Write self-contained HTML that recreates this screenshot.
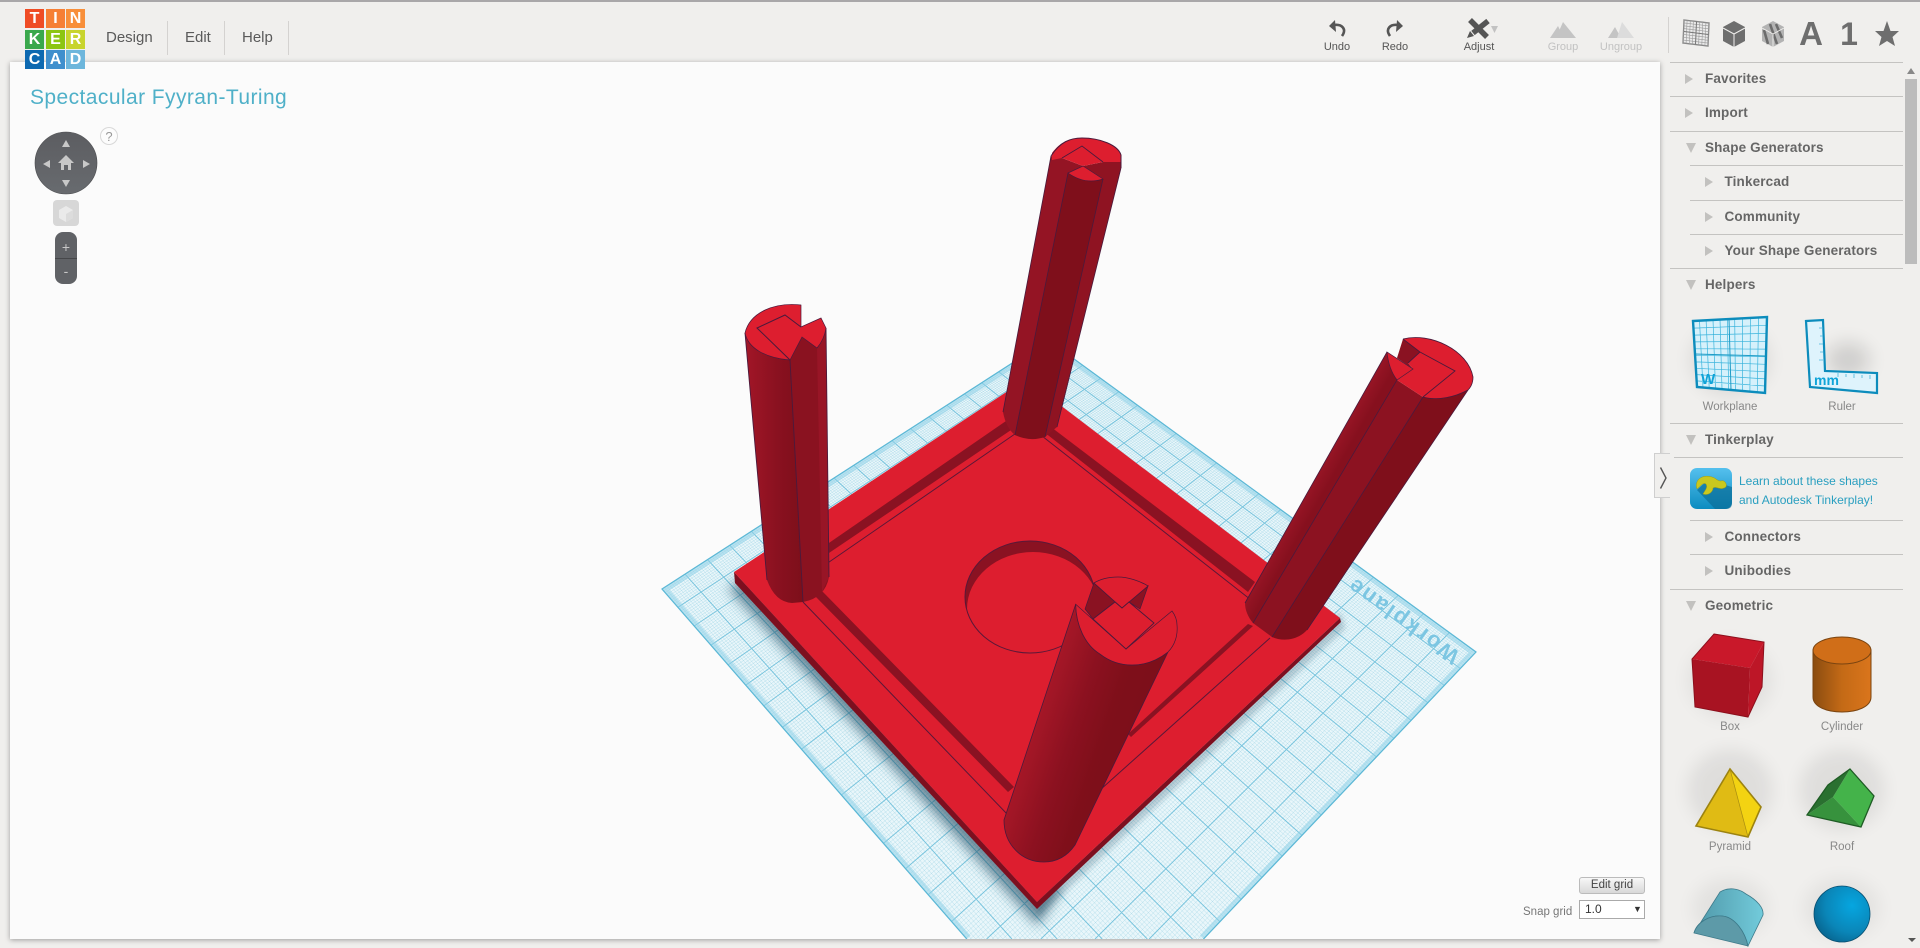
<!DOCTYPE html>
<html><head><meta charset="utf-8"><title>Tinkercad</title>
<style>
html,body{margin:0;padding:0;width:1920px;height:948px;overflow:hidden;background:#f0efed;font-family:"Liberation Sans",sans-serif;color:#555}
.a{position:absolute;white-space:nowrap}
#top{left:0;top:0;width:1920px;height:2px;background:#a9a7a9}
#canvas{left:10px;top:62px;width:1650px;height:877px;background:#fbfbfb;box-shadow:0 1px 5px rgba(0,0,0,.35)}
.menu{font-size:15px;color:#5a5a5a;top:29px;line-height:18px}
.sep{width:1px;top:21px;height:34px;background:#d4d2d0}
.tb{font-size:11px;top:41px;line-height:13px;transform:translateX(-50%);color:#555}
.dis{color:#c2c2c2}
.li{height:1px;background:#c4c3c1;right:17px}
.h{font-size:13.5px;font-weight:bold;color:#666;line-height:16px;letter-spacing:.15px}
.lab{font-size:11.5px;color:#888;transform:translateX(-50%);line-height:14px}
#logo div{position:absolute;width:19px;height:19px;color:#fff;font:bold 16px/19px "Liberation Sans",sans-serif;text-align:center}
svg{position:absolute;left:0;top:0}
</style></head><body>
<div class="a" id="top"></div>
<div class="a" id="canvas"></div>

<div class="a" id="logo" style="left:25px;top:9px;width:60px;height:60px">
<div style="left:0;top:0;background:#ef4c25">T</div><div style="left:21px;top:0;background:#f67f35">I</div><div style="left:41px;top:0;background:#f88f3a">N</div>
<div style="left:0;top:21px;background:#3aa84c">K</div><div style="left:21px;top:21px;background:#8cc512">E</div><div style="left:41px;top:21px;background:#c8d42e">R</div>
<div style="left:0;top:41px;background:#0d69b1">C</div><div style="left:21px;top:41px;background:#3f8fcd">A</div><div style="left:41px;top:41px;background:#6db6dc">D</div>
</div>
<div class="a menu" style="left:106px">Design</div><div class="a sep" style="left:167px"></div>
<div class="a menu" style="left:185px">Edit</div><div class="a sep" style="left:224px"></div>
<div class="a menu" style="left:242px">Help</div><div class="a sep" style="left:288px"></div>

<svg width="1920" height="948" viewBox="0 0 1920 948">
<defs>
<clipPath id="cv"><rect x="10" y="62" width="1650" height="877"/></clipPath>
<clipPath id="pl"><polygon points="662,589 1048,340 1476,652 1203.500,939 966.800,939"/></clipPath>
<clipPath id="rec"><ellipse cx="1030" cy="597" rx="65" ry="56"/></clipPath>
<filter id="b6" x="-30%" y="-30%" width="160%" height="160%"><feGaussianBlur stdDeviation="6"/></filter>
<filter id="b3" x="-30%" y="-30%" width="160%" height="160%"><feGaussianBlur stdDeviation="3"/></filter>
<filter id="b9" x="-50%" y="-50%" width="200%" height="200%"><feGaussianBlur stdDeviation="9"/></filter>
<linearGradient id="g1" x1="0" x2="1" y1="0" y2="0"><stop offset="0" stop-color="#a21627"/><stop offset=".55" stop-color="#8a1120"/><stop offset="1" stop-color="#7d0f1a"/></linearGradient>
<linearGradient id="g3" gradientUnits="userSpaceOnUse" x1="1300" y1="470" x2="1328" y2="486"><stop offset="0" stop-color="#b01a2b"/><stop offset=".6" stop-color="#941424"/><stop offset="1" stop-color="#86101e"/></linearGradient>
<linearGradient id="g4" gradientUnits="userSpaceOnUse" x1="1034" y1="730" x2="1120" y2="759"><stop offset="0" stop-color="#a51727"/><stop offset=".4" stop-color="#8c1120"/><stop offset=".75" stop-color="#7f0f1a"/><stop offset="1" stop-color="#7d0f1a"/></linearGradient>
<linearGradient id="cyl" x1="0" x2="1" y1="0" y2="0"><stop offset="0" stop-color="#8a4c10"/><stop offset=".5" stop-color="#c46a16"/><stop offset="1" stop-color="#da751c"/></linearGradient>
<linearGradient id="nav" x1="0" x2="0" y1="0" y2="1"><stop offset="0" stop-color="#5c5d61"/><stop offset="1" stop-color="#686b6f"/></linearGradient>
<linearGradient id="tile" x1="0" x2="0" y1="0" y2="1"><stop offset="0" stop-color="#55c0ee"/><stop offset="1" stop-color="#0c8cc0"/></linearGradient>
<radialGradient id="sph" cx=".68" cy=".35" r=".8"><stop offset="0" stop-color="#06a6e0"/><stop offset=".6" stop-color="#0a86b8"/><stop offset="1" stop-color="#075f88"/></radialGradient>
<linearGradient id="half" x1="0" x2="1" y1="0" y2="0"><stop offset="0" stop-color="#4f97a8"/><stop offset="1" stop-color="#72cbdb"/></linearGradient>
</defs>

<g clip-path="url(#cv)">
<!-- workplane -->
<polygon points="662,589 1048,340 1476,652 1203.500,939 966.800,939" fill="#e9f6fa"/>
<path id="gmin" d="" stroke="#7fc8de" stroke-width=".5" stroke-opacity=".5" fill="none"/>
<path id="gmaj" d="" stroke="#5cb8d6" stroke-width="1" stroke-opacity=".8" fill="none"/>
<g clip-path="url(#pl)"><path d="M966.800,939 L662,589 L1048,340 L1476,652 L1203.500,939" fill="none" stroke="#8fd2e8" stroke-width="10" stroke-opacity=".55"/></g>
<path d="M966.800,939 L662,589 L1048,340 L1476,652 L1203.500,939" fill="none" stroke="#5cb8d6" stroke-width="1.2"/>
<text transform="translate(1461,653) rotate(215.4)" font-size="22" font-weight="bold" fill="#7cc6e2" letter-spacing="2.2" font-family="Liberation Sans, sans-serif">Workplane</text>
<!-- shadow -->
<g clip-path="url(#pl)"><polygon points="728,588 1038,926 1060,890 760,570" fill="#1a4a60" opacity=".6" filter="url(#b6)"/>
<polygon points="1037,918 1345,628 1340,612 1037,895" fill="#1a4a60" opacity=".25" filter="url(#b3)"/></g>
<!-- plate -->
<polygon points="734,572 1037,902 1340,618 1341,622 1037,909 735,583" fill="#7d0f1f"/>
<polygon points="1026,379 1340,618 1037,902 734,572" fill="#dd1e2f"/>
<!-- recess lines -->
<polygon points="1006,421 1014,428 826,555 826,545" fill="#8a1222"/>
<polygon points="1047,424 1255,582 1248,592 1044,432" fill="#8a1222"/>
<polygon points="815,596 822,591 1014,787 1008,792" fill="#8a1222"/>
<polygon points="1128,734 1248,624 1253,626 1131,737" fill="#8a1222"/>
<path d="M1028,425 L803,580 M1028,425 L1260,607 M803,602 L1008,815 M1100,790 L1270,638" stroke="#5a1838" stroke-width="1" fill="none"/>
<!-- circular recess -->
<ellipse cx="1030" cy="597" rx="65" ry="56" fill="#8a1222"/>
<ellipse cx="1033" cy="609" rx="66" ry="57" fill="#dd1e2f" clip-path="url(#rec)"/>
<ellipse cx="1030" cy="597" rx="65" ry="56" fill="none" stroke="#5a1838" stroke-width="1"/>

<!-- post back -->
<path d="M1051,156 L1003,412 Q1006,428 1015,435 L1068,173 L1083,166 L1062,158 Z" fill="#941424"/>
<path d="M1103,179 L1045,437 L1057,427 L1121,168 L1121,160 L1103,162 L1083,166 Z" fill="#8f1322"/>
<path d="M1068,173 L1015,435 Q1030,442 1045,437 L1103,179 Q1085,184 1068,173 Z" fill="#7f0f1b"/>
<path d="M1068,173 L1015,435 M1103,179 L1045,437 M1051,156 L1003,412 M1121,168 L1057,427" stroke="#4a1a3c" stroke-width=".8" fill="none"/>
<path d="M1052,153 C1060,142 1070,138 1082,138 C1100,138 1118,145 1121,155 L1121,162 L1103,162 L1082,146 L1062,158 L1052,160 Z" fill="#dd1e2f"/>
<path d="M1051,156 C1060,142 1070,138 1082,138 C1100,138 1118,145 1121,155 L1121,168" fill="none" stroke="#4a1a3c" stroke-width="1"/>
<polygon points="1062,158 1082,146 1103,162 1083,166" fill="#dd1e2f"/>
<path d="M1062,158 L1082,146 L1103,162" fill="none" stroke="#4a1a3c" stroke-width=".9"/>
<path d="M1068,173 L1083,166 L1103,179 Q1085,185 1068,173 Z" fill="#dd1e2f" stroke="#4a1a3c" stroke-width=".7"/>

<!-- post left -->
<path d="M745,333 L767,580 Q775,602 792,603 L803,602 L790,360 C765,358 748,348 745,333 Z" fill="url(#g1)"/>
<path d="M790,360 L803,602 Q825,598 829,577 L826,328 L817,348 L802,337 Z" fill="#8a1220"/>
<path d="M817,348 L826,328 L829,577 L822,592 Z" fill="#981526"/>
<path d="M790,360 L803,602 M745,333 L767,580 M826,328 L829,577" stroke="#4a1a3c" stroke-width=".9" fill="none"/>
<path d="M745,333 C750,312 775,302 801,305 L801,327 L821,318 L826,328 C825,335 822,342 817,348 L802,337 L790,360 C765,358 748,348 745,333 Z" fill="#dd1e2f" stroke="#4a1a3c" stroke-width=".7"/>
<path d="M790,360 L757,328 L785,315 L801,327" stroke="#4a1a3c" stroke-width="1" fill="none"/>

<!-- post right -->
<path d="M1387,352 C1388,362 1391,372 1397,380 L1253,623 C1248,617 1245,610 1245,603 Z" fill="url(#g3)"/>
<path d="M1397,380 L1423,397 L1272,637 L1253,623 Z" fill="#8c1221"/>
<path d="M1423,397 C1438,401 1455,397 1468,390 L1307,630 C1298,640 1283,642 1272,637 Z" fill="#7f0f1b"/>
<path d="M1397,380 L1253,623 M1423,397 L1272,637 M1468,390 L1307,630 M1387,352 L1245,603" stroke="#4a1a3c" stroke-width=".8" fill="none"/>
<polygon points="1403,339 1420,352 1408,363 1413,369 1397,358" fill="#8a1222"/>
<path d="M1403,339 C1430,332 1468,350 1473,377 C1473,383 1471,387 1468,390 C1455,397 1438,401 1423,397 L1455,371 L1420,352 Z" fill="#dd1e2f"/>
<path d="M1403,339 C1430,332 1468,350 1473,377 C1473,383 1471,387 1468,390 C1455,397 1438,401 1423,397" fill="none" stroke="#4a1a3c" stroke-width=".8"/>
<polygon points="1420,352 1455,371 1423,397 1397,380 1413,369 1408,363" fill="#dd1e2f"/>
<path d="M1408,363 L1420,352 L1455,371 L1423,397 M1403,339 L1420,352" fill="none" stroke="#4a1a3c" stroke-width=".9"/>
<path d="M1387,352 L1413,369 L1397,380 C1391,372 1388,362 1387,352 Z" fill="#dd1e2f" stroke="#4a1a3c" stroke-width=".7"/>

<!-- post front -->
<path d="M1075.700,604.300 L1004,820 C1004,845 1022,862 1044,862 C1058,862 1068,855 1075,845 L1168,652 C1145,670 1118,668 1100,654 C1085,645 1076,625 1075.700,604.300 Z" fill="url(#g4)" stroke="#4a1a3c" stroke-width=".8"/>
<polygon points="1094,583 1085,609 1093,619 1115,602 1122,608" fill="#8a1222" stroke="#4a1a3c" stroke-width=".7"/>
<polygon points="1148,586 1140,609 1129,602 1122,608" fill="#8a1222" stroke="#4a1a3c" stroke-width=".7"/>
<path d="M1094,583 C1102,578 1110,577 1118,577 C1128,577 1140,581 1148,586 L1122,608 Z" fill="#dd1e2f" stroke="#4a1a3c" stroke-width=".8"/>
<path d="M1075.700,604.300 C1076,625 1085,645 1100,654 C1118,668 1145,670 1168,652 C1175,645 1178,635 1177,625 C1177,620 1175,615 1172,611 L1126,649 Z" fill="#dd1e2f" stroke="#4a1a3c" stroke-width=".7"/>
<polygon points="1093,619 1115,602 1122,608 1129,602 1154,623 1126,649" fill="#dd1e2f" stroke="#4a1a3c" stroke-width=".9"/>
</g>

<!-- nav -->
<circle cx="66" cy="163" r="31" fill="url(#nav)" stroke="#48494c" stroke-width=".6"/>
<g fill="#c8c8c8"><polygon points="66,140 62,147 70,147"/><polygon points="66,187 62,180 70,180"/><polygon points="43,164 50,160 50,168"/><polygon points="90,164 83,160 83,168"/>
<path d="M66,155 L58,163 L61,163 L61,170 L64,170 L64,165 L68,165 L68,170 L71,170 L71,163 L74,163 Z"/></g>
<circle cx="109" cy="136" r="8.5" fill="#fcfcfc" stroke="#d8d8d8"/>
<text x="109" y="141" text-anchor="middle" font-size="13" fill="#999" font-family="Liberation Sans, sans-serif">?</text>
<rect x="53" y="200" width="26" height="26" rx="4" fill="#d7d7d7"/>
<polygon points="66,206 73,210 73,218 66,222 59,218 59,210" fill="#eaeaea"/><polygon points="66,214 73,210 73,218 66,222" fill="#dcdcdc"/>
<rect x="55" y="232" width="22" height="52" rx="8" fill="#606266"/>
<rect x="55" y="258" width="22" height="1" fill="#46474a"/>
<text x="66" y="252" text-anchor="middle" font-size="14" fill="#c8c8c8" font-family="Liberation Sans, sans-serif">+</text>
<text x="66" y="276" text-anchor="middle" font-size="14" fill="#c8c8c8" font-family="Liberation Sans, sans-serif">-</text>

<!-- toolbar icons -->
<g fill="none" stroke="#555" stroke-width="2.6"><path d="M1342,36 C1347,29 1342,24 1334,25"/><path d="M1390,36 C1385,29 1390,24 1398,25"/></g>
<g fill="#555"><polygon points="1329,26 1335,20 1336,32"/><polygon points="1403,26 1397,20 1396,32"/></g>
<g stroke="#555" stroke-width="5.5" fill="none"><path d="M1470,20 L1487,37"/><path d="M1488,21 L1473,33"/></g><polygon points="1467,38 1470,31 1474,36" fill="#555"/>
<polygon points="1491,26 1498,26 1494.5,33" fill="#c2c2c2"/>
<g fill="#c4c4c4"><polygon points="1550,38 1558,26 1564,38"/><polygon points="1556,38 1563,22 1576,38"/><polygon points="1608,38 1615,27 1621,38"/></g>
<polygon points="1617,38 1622,22 1634,38" fill="#dcdcdc"/>
<rect x="1668" y="17" width="1" height="36" fill="#d4d2d0"/>

<!-- top shape icons -->
<polygon points="1684,20 1709,23 1708,46 1683,43" fill="#eaeaea" stroke="#777" stroke-width="1.3"/>
<path id="ic0" d="" stroke="#999" stroke-width=".6" fill="none"/>
<path d="M1696.5,21.5 L1695.5,44.5 M1684,31.5 L1708.5,34.5" stroke="#777" stroke-width="1" fill="none"/>
<polygon points="1734,21 1745,27 1745,41 1734,47 1723,41 1723,27" fill="#6e6e6e"/>
<path d="M1723,28 L1734,34 L1745,28 M1734,34 V47" stroke="#f0efed" stroke-width="1" fill="none"/>
<polygon points="1773,21 1784,27 1784,41 1773,47 1762,41 1762,27" fill="#b3b3b3"/>
<path d="M1764,30 L1768,44 M1770,24 L1777,44 M1776,24 L1782,38" stroke="#6c6c6c" stroke-width="2.6" fill="none"/>
<path d="M1762,28 L1773,34 L1784,28 M1773,34 V47" stroke="#f0efed" stroke-width=".9" fill="none"/>
<text x="1811" y="45" text-anchor="middle" font-size="33" font-weight="bold" fill="#6e6e6e" font-family="Liberation Sans, sans-serif">A</text>
<text x="1849" y="45" text-anchor="middle" font-size="32" font-weight="bold" fill="#6e6e6e" font-family="Liberation Sans, sans-serif">1</text>
<polygon points="1887,21 1890.5,31 1899,31 1892.5,37 1895,46 1887,41 1879,46 1881.5,37 1875,31 1883.5,31" fill="#6e6e6e"/>

<!-- accordion arrows -->
<g fill="#c2c1bf">
<polygon points="1685,74 1693,79 1685,84"/><polygon points="1685,108 1693,113 1685,118"/><polygon points="1686,143 1696,143 1691,153"/>
<polygon points="1705,177 1713,182 1705,187"/><polygon points="1705,212 1713,217 1705,222"/><polygon points="1705,246 1713,251 1705,256"/>
<polygon points="1686,280 1696,280 1691,290"/><polygon points="1686,435 1696,435 1691,445"/>
<polygon points="1705,532 1713,537 1705,542"/><polygon points="1705,566 1713,571 1705,576"/><polygon points="1686,601 1696,601 1691,611"/>
</g>
<!-- scrollbar -->
<rect x="1905" y="79" width="12" height="185" fill="#bcbcbc"/>
<polygon points="1911,68 1915,74 1907,74" fill="#888"/>
<polygon points="1908,938 1916,938 1912,942" fill="#555"/>

<!-- helper icons -->
<ellipse cx="1730" cy="360" rx="40" ry="36" fill="#000" opacity=".08" filter="url(#b9)"/>
<polygon points="1693,321 1767,317 1765,393 1697,387" fill="#d6f1fb"/>
<path id="ic1" d="" stroke="#3ab4dc" stroke-width=".7" fill="none"/>
<path d="M1729,319 L1731,390 M1695,354 L1766,356" stroke="#1f9cc6" stroke-width="1" fill="none"/>
<polygon points="1693,321 1767,317 1765,393 1697,387" fill="none" stroke="#0c8cbc" stroke-width="2.4"/>
<text x="1701" y="384" font-size="15" font-weight="bold" fill="#0fa4d8" font-family="Liberation Sans, sans-serif">W</text>
<ellipse cx="1848" cy="360" rx="22" ry="18" fill="#000" opacity=".13" filter="url(#b9)"/>
<polygon points="1806,321 1823,320 1825,371 1877,373 1877,393 1810,387" fill="#def3fc" stroke="#0c8cbc" stroke-width="2.2"/>
<path d="M1823,328 h-4 M1823,336 h-3 M1823,344 h-4 M1823,352 h-3 M1823,360 h-4 M1838,373 v4 M1846,374 v3 M1854,374 v4 M1862,375 v3 M1870,375 v4" stroke="#4ab5da" stroke-width=".8" fill="none"/>
<text x="1814" y="385" font-size="14" font-weight="bold" fill="#0fa4d8" font-family="Liberation Sans, sans-serif">mm</text>

<!-- tinkerplay tile -->
<rect x="1690" y="468" width="42" height="41" rx="7" fill="url(#tile)"/>
<path d="M1697,490 L1715,509 L1726,509 Q1732,509 1732,503 L1732,487 L1708,480 Z" fill="#0b6d99" opacity=".7"/>
<path d="M1697,489 C1694,480 1702,474 1712,477 C1716,478 1717,481 1721,481 C1725,479 1729,487 1724,488 C1720,490 1716,486 1713,488 C1713,492 1708,496 1703,494 C1705,490 1708,488 1706,484 C1703,482 1701,486 1697,489 Z" fill="#c9c81e" stroke="#9d9c16" stroke-width=".5"/>

<!-- shapes -->
<ellipse cx="1730" cy="680" rx="42" ry="38" fill="#000" opacity=".06" filter="url(#b9)"/>
<polygon points="1714,634 1764,642 1750,668 1692,659" fill="#c9182a"/>
<polygon points="1692,659 1750,668 1748,717 1695,707" fill="#a81322"/>
<polygon points="1750,668 1764,642 1762,687 1748,717" fill="#bd1627"/>
<polygon points="1714,634 1764,642 1762,687 1748,717 1695,707 1692,659" fill="none" stroke="#8c0f1c" stroke-width="1"/>
<path d="M1813,650 V697 C1813,717 1871,717 1871,697 V650 Z" fill="url(#cyl)" stroke="#7a4410" stroke-width="1"/>
<ellipse cx="1842" cy="650.5" rx="29" ry="13.5" fill="#d06e18" stroke="#7a4410" stroke-width="1"/>

<ellipse cx="1730" cy="790" rx="42" ry="40" fill="#000" opacity=".07" filter="url(#b9)"/>
<polygon points="1730,769 1696,826 1748,837" fill="#e0bb14"/>
<polygon points="1730,769 1761,807 1748,837" fill="#f3d312"/>
<polygon points="1730,769 1761,807 1748,837 1696,826" fill="none" stroke="#9c8310" stroke-width="1.6"/>
<path d="M1730,769 L1748,837" stroke="#a88d10" stroke-width=".7"/>
<ellipse cx="1842" cy="790" rx="42" ry="40" fill="#000" opacity=".07" filter="url(#b9)"/>
<polygon points="1850,769 1874,796 1861,827 1833,797" fill="#44b34a"/>
<polygon points="1833,797 1861,827 1807,815" fill="#37923d"/>
<polygon points="1850,769 1828,785 1807,815 1833,797" fill="#2a7030"/>
<polygon points="1850,769 1874,796 1861,827 1807,815 1828,785" fill="none" stroke="#1e5c24" stroke-width="1.3"/>

<ellipse cx="1730" cy="908" rx="38" ry="30" fill="#000" opacity=".05" filter="url(#b9)"/>
<ellipse cx="1842" cy="908" rx="38" ry="30" fill="#000" opacity=".05" filter="url(#b9)"/>
<path d="M1694,933 L1720,892 C1728,887 1738,888 1746,894 C1757,900 1764,908 1763,915 L1748,946 C1745,932 1735,917 1722,916 C1710,915 1697,922 1694,933 Z" fill="url(#half)" stroke="#3d7a8a" stroke-width=".8"/>
<path d="M1694,933 C1697,922 1710,915 1722,916 C1735,917 1745,932 1748,946 Z" fill="#5d9aa8" stroke="#3d7a8a" stroke-width=".8"/>
<circle cx="1842" cy="914" r="28" fill="url(#sph)" stroke="#064e70" stroke-width=".8"/>
</svg>

<!-- title -->
<div class="a" id="title" style="left:30px;top:85px;font-size:21px;line-height:26px;color:#4fb0c8;letter-spacing:.42px">Spectacular Fyyran-Turing</div>

<!-- toolbar labels -->
<div class="a tb" style="left:1337px">Undo</div>
<div class="a tb" style="left:1395px">Redo</div>
<div class="a tb" style="left:1479px">Adjust</div>
<div class="a tb dis" style="left:1563px">Group</div>
<div class="a tb dis" style="left:1621px">Ungroup</div>

<!-- sidebar -->
<div class="a li" style="left:1670px;top:62px"></div>
<div class="a li" style="left:1670px;top:96px"></div>
<div class="a li" style="left:1670px;top:131px"></div>
<div class="a li" style="left:1690px;top:165px"></div>
<div class="a li" style="left:1690px;top:200px"></div>
<div class="a li" style="left:1690px;top:234px"></div>
<div class="a li" style="left:1670px;top:268px"></div>
<div class="a li" style="left:1670px;top:423px"></div>
<div class="a li" style="left:1674px;top:457px"></div>
<div class="a li" style="left:1690px;top:520px"></div>
<div class="a li" style="left:1690px;top:554px"></div>
<div class="a li" style="left:1670px;top:589px"></div>
<div class="a h" style="left:1705px;top:71px">Favorites</div>
<div class="a h" style="left:1705px;top:105px">Import</div>
<div class="a h" style="left:1705px;top:140px">Shape Generators</div>
<div class="a h" style="left:1724.5px;top:174px">Tinkercad</div>
<div class="a h" style="left:1724.5px;top:209px">Community</div>
<div class="a h" style="left:1724.5px;top:243px">Your Shape Generators</div>
<div class="a h" style="left:1705px;top:277px">Helpers</div>
<div class="a h" style="left:1705px;top:432px">Tinkerplay</div>
<div class="a h" style="left:1724.5px;top:529px">Connectors</div>
<div class="a h" style="left:1724.5px;top:563px">Unibodies</div>
<div class="a h" style="left:1705px;top:598px">Geometric</div>
<div class="a lab" style="left:1730px;top:400px">Workplane</div>
<div class="a lab" style="left:1842px;top:400px">Ruler</div>
<div class="a lab" style="left:1730px;top:720px">Box</div>
<div class="a lab" style="left:1842px;top:720px">Cylinder</div>
<div class="a lab" style="left:1730px;top:840px">Pyramid</div>
<div class="a lab" style="left:1842px;top:840px">Roof</div>
<div class="a" style="left:1739px;top:472px;font-size:12px;line-height:19px;color:#2a9fc0">Learn about these shapes<br>and Autodesk Tinkerplay!</div>

<!-- collapse tab -->
<div class="a" style="left:1654px;top:453px;width:16px;height:45px;background:#f0efed;border:1px solid #cfcfcf;border-right:0;box-sizing:border-box"></div>
<svg style="left:1654px;top:453px" width="16" height="46"><path d="M6.500,14.500 L12,25 L6.500,35.500" fill="none" stroke="#555" stroke-width="1.400"/></svg>

<!-- grid controls -->
<div class="a" style="left:1579px;top:877px;width:66px;height:17px;box-sizing:border-box;border:1px solid #bbb;border-radius:3px;background:linear-gradient(#f8f8f8,#d8d8d8);font-size:11.5px;line-height:15px;text-align:center;color:#444">Edit grid</div>
<div class="a" style="left:1523px;top:905px;font-size:11.5px;line-height:14px;color:#777">Snap grid</div>
<div class="a" style="left:1579px;top:900px;width:66px;height:19px;box-sizing:border-box;border:1px solid #aaa;background:#fff;font-size:12px;line-height:17px;color:#333;padding-left:5px">1.0<span style="position:absolute;left:53px;top:0;font-size:9px">▼</span></div>

<script>
function H(p){var x0=p[0][0],y0=p[0][1],x1=p[1][0],y1=p[1][1],x2=p[2][0],y2=p[2][1],x3=p[3][0],y3=p[3][1];
var dx1=x1-x2,dx2=x3-x2,sx=x0-x1+x2-x3,dy1=y1-y2,dy2=y3-y2,sy=y0-y1+y2-y3,D=dx1*dy2-dx2*dy1;
var g=(sx*dy2-dx2*sy)/D,h=(dx1*sy-sx*dy1)/D,a=x1-x0+g*x1,b=x3-x0+h*x3,d=y1-y0+g*y1,e=y3-y0+h*y3;
return function(u,v){var w=g*u+h*v+1;return [(a*u+b*v+x0)/w,(d*u+e*v+y0)/w]}}
function seg(A,B,L){if(A[1]>L&&B[1]>L)return "";
if(A[1]>L){var t=(L-B[1])/(A[1]-B[1]);A=[B[0]+(A[0]-B[0])*t,L]}
if(B[1]>L){var t2=(L-A[1])/(B[1]-A[1]);B=[A[0]+(B[0]-A[0])*t2,L]}
return "M"+A[0].toFixed(1)+","+A[1].toFixed(1)+"L"+B[0].toFixed(1)+","+B[1].toFixed(1)}
function grid(id,p,n,skip,L){var m=H(p),s="";for(var i=0;i<=n;i++){if(skip&&i%skip==0)continue;var t=i/n;
s+=seg(m(t,0),m(t,1),L)+seg(m(0,t),m(1,t),L);}document.getElementById(id).setAttribute("d",s)}
var wp=[[662,589],[1048,340],[1476,652],[1080,1069]];
grid("gmin",wp,200,10,939);grid("gmaj",wp,20,0,939);
grid("ic0",[[1684,20],[1709,23],[1708,46],[1683,43]],8,0,939);
grid("ic1",[[1693,321],[1767,317],[1765,393],[1697,387]],10,0,939);
</script>
</body></html>
